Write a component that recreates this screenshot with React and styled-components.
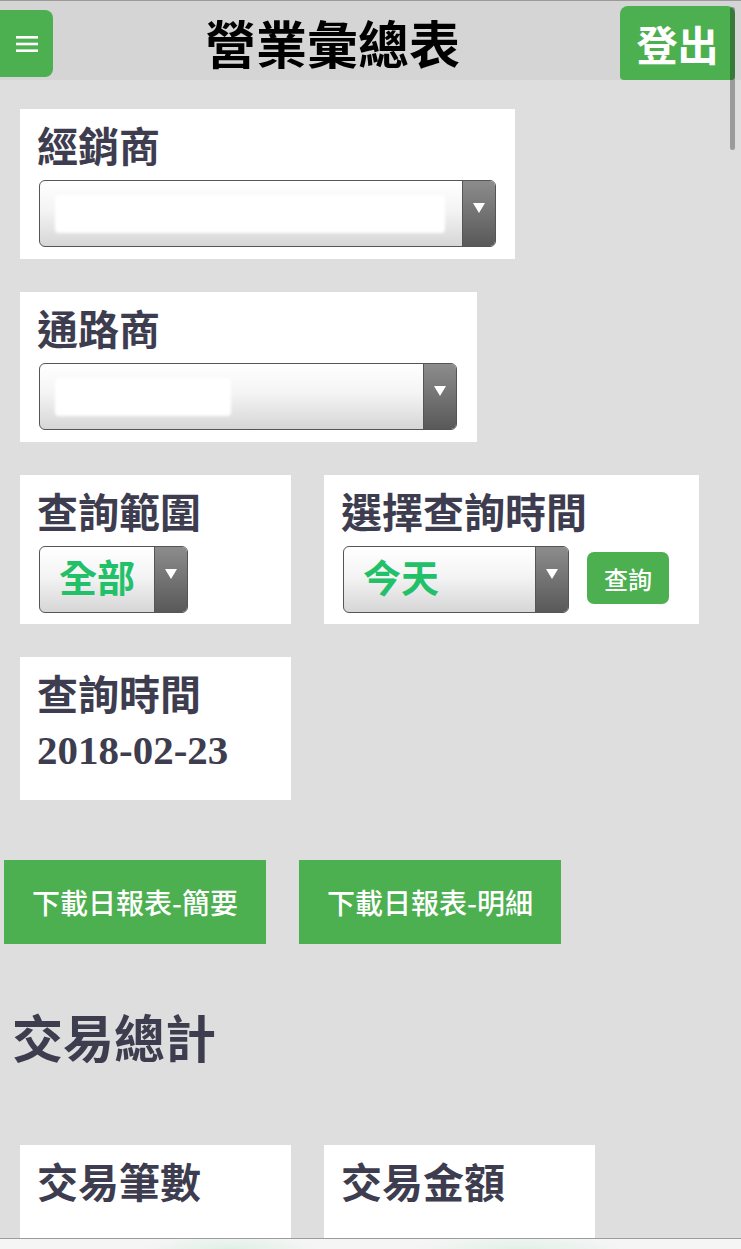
import React from "react";
import styled, { createGlobalStyle } from "styled-components";

const Global = createGlobalStyle`
  html, body { margin: 0; padding: 0; }
  body {
    background: #dedede;
    font-family: "Noto Sans CJK TC", "Noto Sans", sans-serif;
    overflow: hidden;
  }
  * { box-sizing: border-box; }
`;

const Page = styled.div`
  min-height: 1400px;
`;

const Header = styled.header`
  height: 80px;
  background: #d5d5d5;
  border-top: 1px solid #9a9a9a;
  display: flex;
  align-items: flex-start;
`;

const MenuButton = styled.button`
  margin: 9px 0 0 -8px;
  width: 61px;
  height: 67px;
  border: none;
  border-radius: 8px;
  background: #4caf50;
  display: flex;
  align-items: center;
  justify-content: center;
  padding: 0 0 0 8px;
`;

const Title = styled.h1`
  flex: 1;
  margin: 0;
  padding-right: 8px;
  text-align: center;
  font-size: 51px;
  font-weight: 700;
  color: #000;
  line-height: 82px;
`;

const LogoutButton = styled.button`
  margin: 5px 6px 0 0;
  width: 115px;
  height: 74px;
  border: none;
  border-radius: 8px 8px 4px 4px;
  background: #4caf50;
  color: #fff;
  font-family: inherit;
  font-size: 41px;
  font-weight: 700;
  padding: 0;
  line-height: 1;
`;

const ScrollThumb = styled.div`
  position: fixed;
  top: 7px;
  right: 6px;
  width: 5px;
  height: 143px;
  border-radius: 3px;
  background: rgba(0, 0, 0, 0.3);
`;

const Main = styled.main`
  padding: 29px 0 0 20px;
`;

const Row = styled.div`
  display: flex;
  flex-wrap: wrap;
  gap: 33px;
  margin-bottom: ${(p) => p.$mb ?? 33}px;
  margin-left: ${(p) => p.$ml ?? 0}px;
`;

const Card = styled.section`
  background: #fff;
  width: ${(p) => p.$w}px;
  padding: 7px 19px ${(p) => p.$pb ?? 12}px;
  min-height: ${(p) => p.$minH ?? 0}px;
`;

const Label = styled.div`
  margin-left: -2px;
  font-size: 41px;
  font-weight: 700;
  line-height: 56px;
  color: #3d3d4f;
`;

const DateText = styled.div`
  margin-top: 10px;
  margin-left: -2px;
  font-family: "Liberation Serif", "Times New Roman", serif;
  font-size: 41px;
  font-weight: 700;
  line-height: 40px;
  color: #3d3d4f;
`;

const Controls = styled.div`
  display: flex;
  align-items: center;
  gap: 18px;
  margin-top: 8px;
`;

const Select = styled.div`
  width: ${(p) => p.$w}px;
  height: 67px;
  border: 1px solid #555;
  border-radius: 6px;
  overflow: hidden;
  display: flex;
  background: linear-gradient(#ffffff 0%, #f4f4f4 45%, #d6d6d6 100%);
`;

const SelectValue = styled.div`
  flex: 1;
  display: flex;
  align-items: center;
  padding: 0 0 8px ${(p) => p.$pl ?? 19}px;
  font-size: 38px;
  font-weight: 700;
  color: #22c068;
`;

const Redacted = styled.div`
  width: ${(p) => p.$w}px;
  height: 38px;
  margin: 8px 0 0 -4px;
  background: #fff;
  border-radius: 4px;
  filter: blur(1.5px);
`;

const Arrow = styled.div`
  width: 33px;
  border-left: 1px solid #555;
  background: linear-gradient(#8c8c8c, #595959);
  display: flex;
  justify-content: center;
  padding-top: 22px;
`;

const Triangle = styled.span`
  width: 0;
  height: 0;
  border-left: 6px solid transparent;
  border-right: 6px solid transparent;
  border-top: 10px solid #fff;
`;

const QueryButton = styled.button`
  width: 82px;
  height: 52px;
  margin-top: -3px;
  border: none;
  border-radius: 7px;
  background: #4caf50;
  color: #fff;
  font-family: inherit;
  font-size: 24px;
  font-weight: 500;
  padding: 0;
`;

const DownloadButton = styled.button`
  width: 262px;
  height: 84px;
  border: none;
  background: #4caf50;
  color: #fff;
  font-family: inherit;
  font-size: 28px;
  font-weight: 500;
  padding: 0;
`;

const SectionTitle = styled.h2`
  margin: 57px 0 74px -8px;
  font-size: 51px;
  font-weight: 700;
  line-height: 70px;
  color: #3d3d4f;
`;

const BottomBar = styled.div`
  position: fixed;
  left: 0;
  right: 0;
  bottom: 0;
  height: 11px;
  border-top: 1px solid #9c9c9c;
  background:
    radial-gradient(ellipse 90px 14px at 230px 100%, rgba(120, 220, 160, 0.18), transparent),
    radial-gradient(ellipse 110px 14px at 520px 100%, rgba(120, 220, 160, 0.16), transparent),
    #f5f5f5;
`;

function Dropdown({ width, value, redactW, pl }) {
  return (
    <Select $w={width}>
      <SelectValue $pl={pl}>
        {redactW ? <Redacted $w={redactW} /> : value}
      </SelectValue>
      <Arrow>
        <Triangle />
      </Arrow>
    </Select>
  );
}

export default function App() {
  return (
    <Page>
      <Global />
      <Header>
        <MenuButton aria-label="menu">
          <svg width="22" height="16" viewBox="0 0 22 16">
            <rect x="0" y="0" width="22" height="2.6" fill="#fff" />
            <rect x="0" y="6.7" width="22" height="2.6" fill="#fff" />
            <rect x="0" y="13.4" width="22" height="2.6" fill="#fff" />
          </svg>
        </MenuButton>
        <Title>營業彙總表</Title>
        <LogoutButton>登出</LogoutButton>
      </Header>
      <ScrollThumb />
      <Main>
        <Row>
          <Card $w={495}>
            <Label>經銷商</Label>
            <Controls>
              <Dropdown width={457} redactW={390} />
            </Controls>
          </Card>
        </Row>
        <Row>
          <Card $w={457}>
            <Label>通路商</Label>
            <Controls>
              <Dropdown width={418} redactW={176} />
            </Controls>
          </Card>
        </Row>
        <Row>
          <Card $w={271} $pb={11}>
            <Label>查詢範圍</Label>
            <Controls>
              <Dropdown width={149} value="全部" />
            </Controls>
          </Card>
          <Card $w={375} $pb={11}>
            <Label>選擇查詢時間</Label>
            <Controls>
              <Dropdown width={226} value="今天" />
              <QueryButton>查詢</QueryButton>
            </Controls>
          </Card>
        </Row>
        <Row $mb={60}>
          <Card $w={271} $pb={30}>
            <Label>查詢時間</Label>
            <DateText>2018-02-23</DateText>
          </Card>
        </Row>
        <Row $ml={-16} $mb={0}>
          <DownloadButton>下載日報表-簡要</DownloadButton>
          <DownloadButton>下載日報表-明細</DownloadButton>
        </Row>
        <SectionTitle>交易總計</SectionTitle>
        <Row>
          <Card $w={271} $minH={200}>
            <Label>交易筆數</Label>
          </Card>
          <Card $w={271} $minH={200}>
            <Label>交易金額</Label>
          </Card>
        </Row>
      </Main>
      <BottomBar />
    </Page>
  );
}
